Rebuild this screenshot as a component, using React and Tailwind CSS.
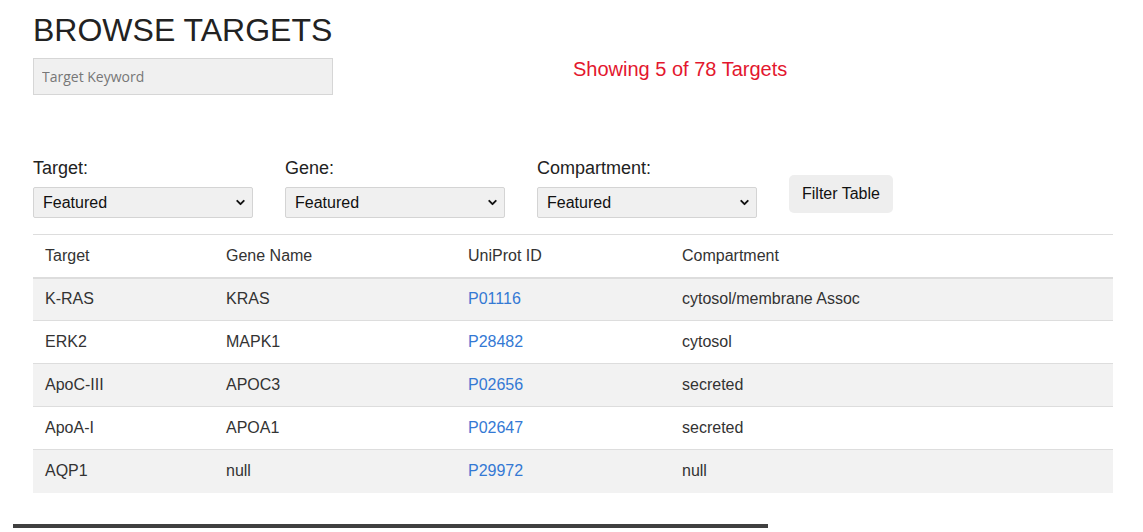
import { ChevronDown } from "lucide-react";

const rows = [
  { target: "K-RAS", gene: "KRAS", id: "P01116", comp: "cytosol/membrane Assoc" },
  { target: "ERK2", gene: "MAPK1", id: "P28482", comp: "cytosol" },
  { target: "ApoC-III", gene: "APOC3", id: "P02656", comp: "secreted" },
  { target: "ApoA-I", gene: "APOA1", id: "P02647", comp: "secreted" },
  { target: "AQP1", gene: "null", id: "P29972", comp: "null" },
];

function FilterSelect({ label }) {
  return (
    <div className="flex flex-col w-[220px]">
      <label className="text-[18px] leading-[22px] text-[#222] mt-[2px] mb-[8px]">{label}</label>
      <div className="relative">
        <select className="appearance-none w-full h-[31px] bg-[#f0f0f0] border border-[#d4d4d4] rounded-[2px] pl-[9px] text-[16px] text-[#111] outline-none">
          <option>Featured</option>
        </select>
        <ChevronDown className="absolute right-[6px] top-[9px] w-[13px] h-[13px] text-[#111] pointer-events-none" strokeWidth={3.5} />
      </div>
    </div>
  );
}

export default function App() {
  return (
    <div className="bg-white min-h-[532px] font-['Liberation_Sans',Arial,sans-serif] text-[#333]">
      <div className="w-[1080px] ml-[33px]">
        {/* Header */}
        <div className="flex">
          <div className="w-[540px]">
            <h1 className="text-[32px] leading-[36px] text-[#222] pt-[12px]">BROWSE TARGETS</h1>
            <input
              placeholder="Target Keyword"
              className="mt-[10px] w-[300px] h-[37px] bg-[#f0f0f0] border border-[#d6d6d6] px-[8px] text-[14px] font-['Open_Sans',sans-serif] placeholder:text-[#777] outline-none"
            />
          </div>
          <div className="w-[540px] pt-[57px]">
            <p className="text-[20px] leading-[24px] text-[#e3172e]">Showing 5 of 78 Targets</p>
          </div>
        </div>

        {/* Filters */}
        <div className="flex items-start gap-[32px] mt-[60px]">
          <FilterSelect label="Target:" />
          <FilterSelect label="Gene:" />
          <FilterSelect label="Compartment:" />
          <button className="bg-[#eeeeee] rounded-[5px] h-[38px] px-[13px] text-[16px] text-[#111] mt-[20px]">
            Filter Table
          </button>
        </div>

        {/* Table */}
        <table className="w-full mt-[16px] border-collapse text-[16px] text-[#333]">
          <thead>
            <tr className="border-t border-[#dddddd] border-b-2">
              <th className="w-[181px] text-left font-normal h-[43px] px-[12px]">Target</th>
              <th className="w-[242px] text-left font-normal px-[12px]">Gene Name</th>
              <th className="w-[214px] text-left font-normal px-[12px]">UniProt ID</th>
              <th className="text-left font-normal px-[12px]">Compartment</th>
            </tr>
          </thead>
          <tbody>
            {rows.map((r, i) => (
              <tr key={r.id} className={`border-t border-[#dddddd] ${i % 2 === 0 ? "bg-[#f2f2f2]" : "bg-white"}`}>
                <td className="h-[43px] px-[12px]">{r.target}</td>
                <td className="px-[12px]">{r.gene}</td>
                <td className="px-[12px] text-[#3479d4]">{r.id}</td>
                <td className="px-[12px]">{r.comp}</td>
              </tr>
            ))}
          </tbody>
        </table>
      </div>

      {/* bottom scroll bar */}
      <div className="ml-[13px] mt-[31px] w-[755px] h-[4px] bg-[#404040]" />
    </div>
  );
}
